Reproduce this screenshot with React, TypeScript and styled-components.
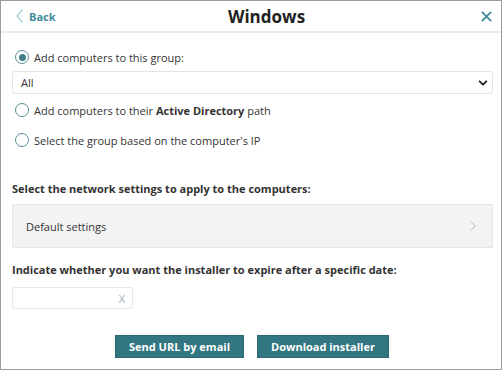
import React from 'react';
import styled, { createGlobalStyle } from 'styled-components';

const GlobalStyle = createGlobalStyle`
  html, body {
    margin: 0;
    padding: 0;
    background: #ffffff;
  }
  * {
    box-sizing: border-box;
  }
`;

const teal = '#3f8c99';

const Panel = styled.div`
  width: 502px;
  height: 370px;
  border: 1px solid #9c9c9c;
  font-family: 'Open Sans', 'Liberation Sans', sans-serif;
  font-size: 11px;
  color: #333333;
  display: flex;
  flex-direction: column;
  overflow: hidden;
`;

const Header = styled.header`
  height: 32px;
  flex-shrink: 0;
  border-bottom: 2px solid #ececec;
  display: grid;
  grid-template-columns: 214px auto 1fr;
  align-items: center;
  padding: 0 8px 0 13px;
`;

const BackLink = styled.a`
  display: flex;
  align-items: center;
  gap: 3px;
  color: ${teal};
  font-weight: 700;
  font-size: 11px;
  cursor: pointer;
`;

const Title = styled.h1`
  margin: 0;
  font-size: 17px;
  font-weight: 700;
  color: #222222;
`;

const CloseButton = styled.button`
  justify-self: end;
  border: none;
  background: none;
  padding: 0;
  display: flex;
  color: ${teal};
`;

const Content = styled.main`
  flex: 1;
  padding: 15px 8px 0 10px;
  display: flex;
  flex-direction: column;
`;

const RadioRow = styled.label<{ $gap: number }>`
  display: flex;
  align-items: center;
  gap: 5px;
  height: 16px;
  margin: ${(p) => p.$gap}px 0 0 4px;
`;

const Radio = styled.span<{ $checked?: boolean }>`
  width: 14px;
  height: 14px;
  border-radius: 50%;
  border: 1.3px solid #5a8f98;
  display: flex;
  align-items: center;
  justify-content: center;
  flex-shrink: 0;

  &::after {
    content: '';
    width: 7px;
    height: 7px;
    border-radius: 50%;
    background: ${(p) => (p.$checked ? '#3f7f8a' : 'transparent')};
  }
`;

const SelectBox = styled.div`
  margin: 6px 0 0 1px;
  height: 23px;
  border: 1px solid #e4e4e4;
  border-radius: 3px;
  display: flex;
  align-items: center;
  justify-content: space-between;
  padding: 0 4px 0 8px;
`;

const SectionLabel = styled.div<{ $gap: number }>`
  font-weight: 700;
  height: 16px;
  line-height: 16px;
  margin: ${(p) => p.$gap}px 0 0 1px;
`;

const SettingsRow = styled.div`
  margin: 7px 0 0 1px;
  height: 44px;
  background: #f3f3f3;
  border: 1px solid #e6e6e6;
  display: flex;
  align-items: center;
  justify-content: space-between;
  padding: 0 15px 0 13px;
`;

const DateInput = styled.div`
  margin: 9px 0 0 1px;
  width: 121px;
  height: 22px;
  border: 1px solid #e6e6e6;
  border-radius: 3px;
  display: flex;
  align-items: center;
  justify-content: flex-end;
  padding-right: 7px;
  color: #a3acb5;
`;

const Actions = styled.div`
  margin-top: 26px;
  display: flex;
  justify-content: center;
  gap: 13px;
`;

const ActionButton = styled.button<{ $width: number }>`
  width: ${(p) => p.$width}px;
  height: 23px;
  background: #327682;
  color: #ffffff;
  border: 1px solid #2b6873;
  font-family: 'Open Sans', 'Liberation Sans', sans-serif;
  font-weight: 700;
  font-size: 11px;
  padding: 0;
`;

const Chevron = ({ dir, color, size = 12, stroke = 1.4 }: { dir: 'left' | 'right' | 'down'; color: string; size?: number; stroke?: number }) => {
  const d = dir === 'left' ? 'M8 1 L3 7 L8 13' : dir === 'right' ? 'M5 2 L10 7 L5 12' : 'M2 4 L6 8 L10 4';
  const vb = dir === 'down' ? '0 0 12 12' : '0 0 12 14';
  return (
    <svg width={size} height={dir === 'down' ? size : size * 1.17} viewBox={vb} fill="none">
      <path d={d} stroke={color} strokeWidth={stroke} strokeLinecap="round" strokeLinejoin="round" />
    </svg>
  );
};

function App() {
  return (
    <>
      <GlobalStyle />
      <Panel>
        <Header>
          <BackLink>
            <Chevron dir="left" color="#7fb8c2" size={12} stroke={1.1} />
            Back
          </BackLink>
          <Title>Windows</Title>
          <CloseButton aria-label="Close">
            <svg width="13" height="13" viewBox="0 0 14 14">
              <path d="M2 2 L12 12 M12 2 L2 12" stroke="currentColor" strokeWidth="2" />
            </svg>
          </CloseButton>
        </Header>
        <Content>
          <RadioRow $gap={1}>
            <Radio $checked />
            Add computers to this group:
          </RadioRow>
          <SelectBox>
            All
            <Chevron dir="down" color="#222" size={10} stroke={2.2} />
          </SelectBox>
          <RadioRow $gap={8}>
            <Radio />
            <span>
              Add computers to their <b>Active Directory</b> path
            </span>
          </RadioRow>
          <RadioRow $gap={14}>
            <Radio />
            Select the group based on the computer's IP
          </RadioRow>
          <SectionLabel $gap={33}>Select the network settings to apply to the computers:</SectionLabel>
          <SettingsRow>
            Default settings
            <Chevron dir="right" color="#aaaaaa" size={10} stroke={1} />
          </SettingsRow>
          <SectionLabel $gap={14}>Indicate whether you want the installer to expire after a specific date:</SectionLabel>
          <DateInput>X</DateInput>
          <Actions>
            <ActionButton $width={129}>Send URL by email</ActionButton>
            <ActionButton $width={132}>Download installer</ActionButton>
          </Actions>
        </Content>
      </Panel>
    </>
  );
}

export default App;
